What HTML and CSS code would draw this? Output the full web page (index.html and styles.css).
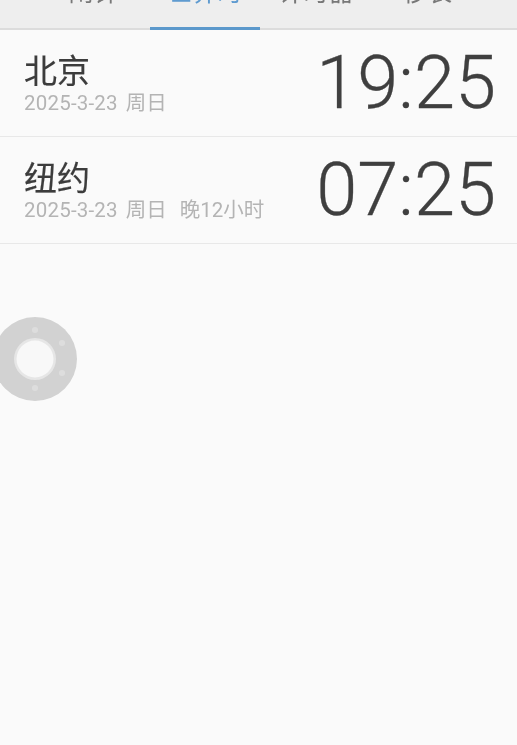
FILE: index.html
```html
<!DOCTYPE html>
<html lang="zh">
<head>
<meta charset="utf-8">
<title>世界时</title>
<link rel="stylesheet" href="styles.css">
</head>
<body>
<div class="app">
  <nav class="tabs">
    <div class="tab">闹钟</div>
    <div class="tab active">世界时</div>
    <div class="tab">计时器</div>
    <div class="tab">秒表</div>
  </nav>
  <main class="list">
    <section class="row">
      <div class="info">
        <div class="city">北京</div>
        <div class="date"><span class="day">2025-3-23</span><span>周日</span></div>
      </div>
      <div class="time">19:25</div>
    </section>
    <section class="row">
      <div class="info">
        <div class="city">纽约</div>
        <div class="date"><span class="day">2025-3-23</span><span>周日</span><span>晚12小时</span></div>
      </div>
      <div class="time">07:25</div>
    </section>
  </main>
  <div class="ball" aria-hidden="true">
    <svg viewBox="0 0 84 84" width="84" height="84">
      <circle cx="42" cy="42" r="42" fill="#d2d2d2"/>
      <circle cx="42" cy="42" r="21" fill="#e6e6e6"/>
      <circle cx="42" cy="42" r="18.5" fill="#f8f8f8"/>
      <circle cx="42" cy="13" r="3" fill="#dddddd"/>
      <circle cx="69" cy="26" r="3" fill="#dddddd"/>
      <circle cx="69" cy="56" r="3" fill="#dddddd"/>
      <circle cx="42" cy="71" r="3" fill="#dddddd"/>
    </svg>
  </div>
</div>
</body>
</html>
```
FILE: styles.css
```css
* {
  box-sizing: border-box;
}

html,
body {
  margin: 0;
  height: 100%;
}

body {
  background: #fafafa;
  font-family: Roboto, "Noto Sans CJK SC", sans-serif;
  overflow: hidden;
}

.app {
  position: relative;
  height: 745px;
  overflow: hidden;
  filter: blur(0.45px);
}

.tabs {
  display: flex;
  height: 30px;
  padding: 0 34px 0 38px;
  align-items: flex-end;
  background: #eeeeee;
  border-bottom: 2px solid #dcdcdc;
}

.tab {
  position: relative;
  flex: 1;
  height: 53px;
  text-align: center;
  font-size: 25px;
  line-height: 35px;
  color: #787878;
}

.tab.active {
  color: #5f9bd0;
}

.tab.active::after {
  content: "";
  position: absolute;
  left: 1px;
  right: 1px;
  bottom: -2px;
  height: 3px;
  background: #5b98cb;
}

.row {
  display: flex;
  align-items: center;
  justify-content: space-between;
  height: 107px;
  padding: 0 21px 0 24px;
  border-bottom: 1.500px solid #e8e8e8;
}

.info {
  display: flex;
  flex-direction: column;
}

.city {
  font-size: 33px;
  line-height: 39px;
  color: #3c3c3c;
  -webkit-text-stroke: 0.2px #3c3c3c;
}

.date {
  display: flex;
  gap: 8px;
  font-size: 20.500px;
  line-height: 24px;
  color: #b4b4b4;
}

.day {
  letter-spacing: 0.2px;
}

.date span + span + span {
  margin-left: 5px;
}

.time {
  font-size: 74px;
  font-weight: 300;
  line-height: 86px;
  color: #3f3f3f;
  margin-top: -1px;
  -webkit-text-stroke: 0.3px #3f3f3f;
}

.ball {
  position: absolute;
  left: -7px;
  top: 317px;
  width: 84px;
  height: 84px;
}

.ball svg {
  display: block;
}
```
